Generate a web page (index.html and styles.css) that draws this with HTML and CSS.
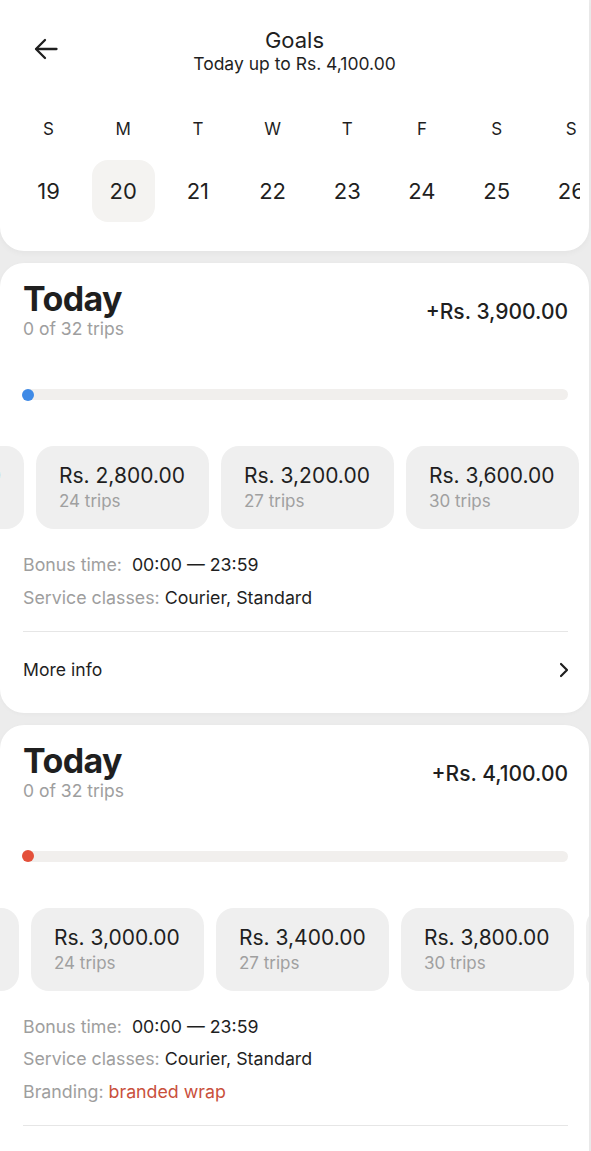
FILE: index.html
```html
<!DOCTYPE html>
<html lang="en">
<head>
<meta charset="utf-8">
<title>Goals</title>
<link rel="stylesheet" href="styles.css">
</head>
<body>
<div class="screen">
  <header class="top-card">
    <div class="topbar">
      <button class="back" aria-label="Back">
        <svg width="24" height="22" viewBox="0 0 24 22" fill="none" stroke="#1f1f1f" stroke-width="2.3" stroke-linecap="round" stroke-linejoin="round"><path d="M22.5 11H2.5"/><path d="M11 2L2 11l9 9"/></svg>
      </button>
      <div class="title-block">
        <div class="title">Goals</div>
        <div class="subtitle">Today up to Rs. 4,100.00</div>
      </div>
      <div class="spacer"></div>
    </div>
    <div class="week">
      <div class="day"><span class="dow">S</span><span class="date">19</span></div>
      <div class="day"><span class="dow">M</span><span class="date selected">20</span></div>
      <div class="day"><span class="dow">T</span><span class="date">21</span></div>
      <div class="day"><span class="dow">W</span><span class="date">22</span></div>
      <div class="day"><span class="dow">T</span><span class="date">23</span></div>
      <div class="day"><span class="dow">F</span><span class="date">24</span></div>
      <div class="day"><span class="dow">S</span><span class="date">25</span></div>
      <div class="day"><span class="dow">S</span><span class="date">26</span></div>
    </div>
  </header>

  <section class="goal-card">
    <div class="goal-head">
      <div>
        <div class="goal-title">Today</div>
        <div class="goal-trips">0 of 32 trips</div>
      </div>
      <div class="goal-amount">+Rs. 3,900.00</div>
    </div>
    <div class="progress"><span class="progress-dot dot-blue"></span></div>
    <div class="tiers tiers-a">
      <div class="tier"><div class="tier-amount">Rs. 2,400.00</div><div class="tier-trips">21 trips</div></div>
      <div class="tier"><div class="tier-amount">Rs. 2,800.00</div><div class="tier-trips">24 trips</div></div>
      <div class="tier"><div class="tier-amount">Rs. 3,200.00</div><div class="tier-trips">27 trips</div></div>
      <div class="tier"><div class="tier-amount">Rs. 3,600.00</div><div class="tier-trips">30 trips</div></div>
      <div class="tier"><div class="tier-amount">Rs. 3,900.00</div><div class="tier-trips">32 trips</div></div>
    </div>
    <div class="details">
      <div><span class="label">Bonus time:&nbsp; </span><span class="value">00:00 — 23:59</span></div>
      <div><span class="label">Service classes: </span><span class="value">Courier, Standard</span></div>
    </div>
    <div class="divider"></div>
    <div class="more">
      <span>More info</span>
      <svg width="10" height="16" viewBox="0 0 10 16" fill="none" stroke="#1f1f1f" stroke-width="2.2" stroke-linecap="round" stroke-linejoin="round"><path d="M2 2l6 6-6 6"/></svg>
    </div>
  </section>

  <section class="goal-card">
    <div class="goal-head">
      <div>
        <div class="goal-title">Today</div>
        <div class="goal-trips">0 of 32 trips</div>
      </div>
      <div class="goal-amount">+Rs. 4,100.00</div>
    </div>
    <div class="progress"><span class="progress-dot dot-red"></span></div>
    <div class="tiers tiers-b">
      <div class="tier"><div class="tier-amount">Rs. 2,600.00</div><div class="tier-trips">21 trips</div></div>
      <div class="tier"><div class="tier-amount">Rs. 3,000.00</div><div class="tier-trips">24 trips</div></div>
      <div class="tier"><div class="tier-amount">Rs. 3,400.00</div><div class="tier-trips">27 trips</div></div>
      <div class="tier"><div class="tier-amount">Rs. 3,800.00</div><div class="tier-trips">30 trips</div></div>
      <div class="tier"><div class="tier-amount">Rs. 4,100.00</div><div class="tier-trips">32 trips</div></div>
    </div>
    <div class="details">
      <div><span class="label">Bonus time:&nbsp; </span><span class="value">00:00 — 23:59</span></div>
      <div><span class="label">Service classes: </span><span class="value">Courier, Standard</span></div>
      <div><span class="label">Branding: </span><span class="brand">branded wrap</span></div>
    </div>
    <div class="divider"></div>
    <div class="more">
      <span>More info</span>
      <svg width="10" height="16" viewBox="0 0 10 16" fill="none" stroke="#1f1f1f" stroke-width="2.2" stroke-linecap="round" stroke-linejoin="round"><path d="M2 2l6 6-6 6"/></svg>
    </div>
  </section>
</div>
</body>
</html>
```

FILE: styles.css
```css
* { box-sizing: border-box; }

html, body {
  margin: 0;
  padding: 0;
  background: #ececec;
}

body {
  font-family: Inter, "Noto Sans", "Liberation Sans", sans-serif;
  color: #1f1f1f;
  overflow-x: hidden;
}

.screen {
  width: 589px;
}

/* ---------- header card ---------- */
.top-card {
  background: #ffffff;
  border-radius: 0 0 24px 24px;
  padding: 27px 0 29px;
  overflow: hidden;
  box-shadow: 0 2px 6px rgba(0, 0, 0, 0.04);
}

.topbar {
  display: grid;
  grid-template-columns: 1fr auto 1fr;
  align-items: center;
}

.back {
  justify-self: start;
  margin-left: 34px;
  margin-top: -4px;
  padding: 0;
  border: 0;
  background: none;
  display: flex;
}

.title-block {
  text-align: center;
}

.title {
  font-size: 22px;
  line-height: 26px;
  font-weight: 400;
}

.subtitle {
  font-size: 17.5px;
  line-height: 22px;
}

.week {
  display: grid;
  grid-template-columns: repeat(8, 63px);
  column-gap: 11.7px;
  padding-left: 17px;
  margin-top: 43px;
  margin-right: 9px;
  overflow: hidden;
}

.day {
  display: flex;
  flex-direction: column;
  align-items: center;
}

.dow {
  font-size: 17px;
  line-height: 22px;
}

.date {
  margin-top: 20px;
  width: 63px;
  height: 62px;
  border-radius: 16px;
  display: flex;
  align-items: center;
  justify-content: center;
  font-size: 22px;
}

.date.selected {
  background: #f4f3f1;
}

/* ---------- goal cards ---------- */
.goal-card {
  background: #ffffff;
  border-radius: 24px;
  margin-top: 12px;
  padding: 17px 21px 0 23px;
  overflow: hidden;
  box-shadow: 0 1px 4px rgba(0, 0, 0, 0.03);
}

.goal-head {
  display: flex;
  justify-content: space-between;
  align-items: flex-start;
}

.goal-title {
  font-size: 34px;
  line-height: 38px;
  font-weight: 700;
  letter-spacing: -0.6px;
}

.goal-trips {
  font-size: 17.5px;
  line-height: 22px;
  color: #9e9e9e;
}

.goal-amount {
  margin-top: 19px;
  font-size: 21px;
  line-height: 26px;
  font-weight: 500;
}

.progress {
  margin-top: 49px;
  height: 11px;
  border-radius: 6px;
  background: #f1efed;
  display: flex;
  align-items: center;
}

.progress-dot {
  width: 12px;
  height: 12px;
  border-radius: 50%;
  margin-left: -1px;
}

.dot-blue { background: #3f8ae6; }
.dot-red { background: #e4503a; }

.tiers {
  display: flex;
  gap: 12px;
  margin-top: 46px;
}

.tiers-a { margin-left: -172px; }
.tiers-b { margin-left: -177px; }

.tier {
  flex: 0 0 173px;
  height: 83px;
  padding: 17px 0 0 23px;
  border-radius: 18px;
  background: #efefef;
  white-space: nowrap;
}

.tier-amount {
  font-size: 21px;
  line-height: 26px;
}

.tier-trips {
  font-size: 17px;
  line-height: 24px;
  color: #a0a0a0;
}

.details {
  margin-top: 24px;
  display: flex;
  flex-direction: column;
  gap: 8.5px;
  font-size: 17.8px;
  line-height: 24px;
}

.label { color: #9e9e9e; }
.value { color: #1f1f1f; }
.brand { color: #c9503c; }

.divider {
  margin-top: 21px;
  border-top: 1px solid #e6e6e6;
}

.more {
  display: flex;
  justify-content: space-between;
  align-items: center;
  padding: 26px 0 31px;
  font-size: 17.6px;
  line-height: 24px;
}

.more svg {
  margin-right: -1px;
}
```
